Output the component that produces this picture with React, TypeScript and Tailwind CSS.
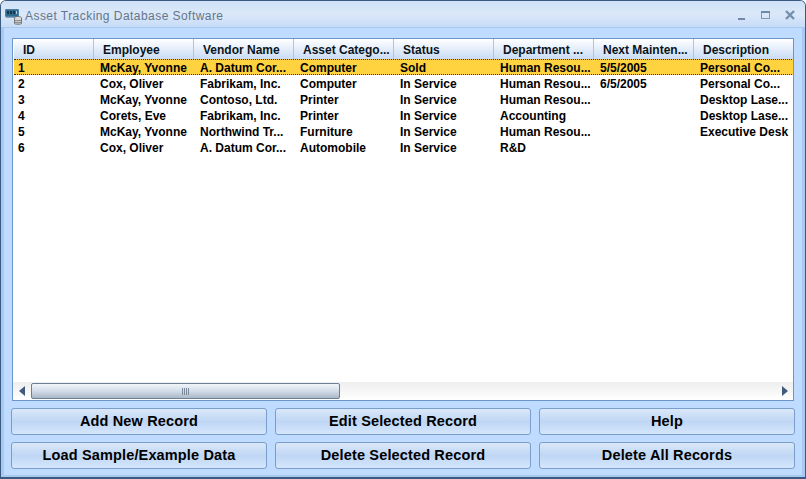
import * as React from "react";

const columns = [
  "ID",
  "Employee",
  "Vendor Name",
  "Asset Catego...",
  "Status",
  "Department ...",
  "Next Mainten...",
  "Description",
];

const rows = [
  ["1", "McKay, Yvonne", "A. Datum Cor...", "Computer", "Sold", "Human Resou...", "5/5/2005", "Personal Co..."],
  ["2", "Cox, Oliver", "Fabrikam, Inc.", "Computer", "In Service", "Human Resou...", "6/5/2005", "Personal Co..."],
  ["3", "McKay, Yvonne", "Contoso, Ltd.", "Printer", "In Service", "Human Resou...", "", "Desktop Lase..."],
  ["4", "Corets, Eve", "Fabrikam, Inc.", "Printer", "In Service", "Accounting", "", "Desktop Lase..."],
  ["5", "McKay, Yvonne", "Northwind Tr...", "Furniture", "In Service", "Human Resou...", "", "Executive Desk"],
  ["6", "Cox, Oliver", "A. Datum Cor...", "Automobile", "In Service", "R&D", "", ""],
];

const buttons = [
  "Add New Record",
  "Edit Selected Record",
  "Help",
  "Load Sample/Example Data",
  "Delete Selected Record",
  "Delete All Records",
];

function AppIcon() {
  return (
    <svg width="18" height="18" viewBox="0 0 18 18" className="shrink-0">
      <rect x="0" y="2" width="14" height="8" rx="1" fill="#4d7fa8" />
      <rect x="1" y="3" width="12" height="6" fill="#2f6d8f" />
      <rect x="2" y="4" width="2" height="3" fill="#16384f" />
      <rect x="5" y="4" width="2" height="3" fill="#16384f" />
      <rect x="8" y="4" width="2" height="3" fill="#16384f" />
      <rect x="11" y="4" width="1" height="3" fill="#a9d0e4" />
      <rect x="1" y="10" width="11" height="1" fill="#8aa2b5" />
      <ellipse cx="13" cy="11" rx="3.5" ry="1.5" fill="#e8e8e8" stroke="#555" strokeWidth="0.7" />
      <path d="M9.5 11v5.5c0 1 7 1 7 0V11" fill="#d8d8d8" stroke="#555" strokeWidth="0.7" />
      <path d="M9.5 13c0 1 7 1 7 0M9.5 15c0 1 7 1 7 0" fill="none" stroke="#555" strokeWidth="0.7" />
    </svg>
  );
}

function WindowControls() {
  return (
    <div className="-mt-[1px] flex items-center gap-[12px] pr-[9px]">
      <svg width="12" height="12" viewBox="0 0 12 12">
        <rect x="2" y="9" width="7" height="2" fill="#6f8aa8" />
      </svg>
      <svg width="12" height="12" viewBox="0 0 12 12">
        <rect x="1.5" y="2.5" width="8" height="7" fill="none" stroke="#7f98b4" />
        <rect x="1" y="2" width="9" height="2" fill="#6f8aa8" />
      </svg>
      <svg width="12" height="12" viewBox="0 0 12 12">
        <path d="M2 2l8 8M10 2l-8 8" stroke="#7490ad" strokeWidth="2.4" />
      </svg>
    </div>
  );
}

function ScrollBar() {
  return (
    <div className="flex h-[18px] shrink-0 items-center bg-gradient-to-b from-[#eeeeee] via-[#f6f6f6] to-[#ffffff]">
      <div className="flex w-[18px] shrink-0 justify-center">
        <svg width="7" height="10" viewBox="0 0 7 10">
          <path d="M6 0v10L0 5z" fill="#41597c" />
        </svg>
      </div>
      <div className="flex h-[16px] w-[309px] shrink-0 items-center justify-center rounded-[2px] border border-[#6d7f95] bg-gradient-to-b from-[#f0f5fa] via-[#d3dde8] to-[#aab8c8]">
        <svg width="8" height="7" viewBox="0 0 8 7">
          <path d="M0.5 0v7M2.5 0v7M4.5 0v7M6.5 0v7" stroke="#7c8a9c" />
        </svg>
      </div>
      <div className="flex-1" />
      <div className="flex w-[18px] shrink-0 justify-center">
        <svg width="7" height="10" viewBox="0 0 7 10">
          <path d="M1 0v10L7 5z" fill="#41597c" />
        </svg>
      </div>
    </div>
  );
}

export default function App() {
  return (
    <div className="flex h-[479px] w-[806px] flex-col overflow-hidden rounded-t-[6px] border border-b-2 border-[#3a5a80] bg-[#bfdbff] font-['Liberation_Sans',sans-serif]">
      {/* title bar */}
      <div className="flex h-[27px] shrink-0 items-center border-b border-[#a9c8f0] bg-gradient-to-b from-[#cfe1f8] via-[#dbe8f9] to-[#c7dcf7] pl-[4px] pt-[3px]">
        <AppIcon />
        <span className="ml-[2px] flex-1 text-[12px] tracking-[0.45px] text-[#65758b]">
          Asset Tracking Database Software
        </span>
        <WindowControls />
      </div>

      <div className="flex flex-1 flex-col border-x-[3px] border-b-[2px] border-[#a8c9f1] px-[7px] pt-[10px]">
        {/* table */}
        <div className="mx-[1px] flex h-[363px] shrink-0 flex-col overflow-hidden border border-[#6c95c9] bg-white">
          <div className="flex flex-1 flex-col overflow-hidden pl-[1px]">
            <div className="flex h-[20px] w-[800px] shrink-0 bg-gradient-to-b from-[#ffffff] to-[#c9dcf5]">
              {columns.map((c, i) => (
                <div
                  key={c}
                  className={`flex items-center pl-[9px] pt-[2px] text-[12px] font-bold text-[#0a1420] ${
                    i === 0 ? "w-[80px]" : "w-[100px]"
                  } ${i < 7 ? "border-r border-[#a9c6ea]" : ""}`}
                >
                  {c}
                </div>
              ))}
            </div>
            {rows.map((r, i) => (
              <div
                key={r[0]}
                className={`flex h-[16px] w-[800px] shrink-0 items-center text-[12px] font-bold text-black ${
                  i === 0 ? "border-y border-dotted border-[#33301f] bg-[#ffd23f]" : ""
                }`}
              >
                {r.map((cell, j) => (
                  <div
                    key={j}
                    className={`whitespace-nowrap pt-[2px] ${j === 0 ? "w-[80px] pl-[4px]" : "w-[100px] pl-[6px]"}`}
                  >
                    {cell}
                  </div>
                ))}
              </div>
            ))}
          </div>
          <ScrollBar />
        </div>

        {/* buttons */}
        <div className="mt-[7px] grid grid-cols-3 gap-x-[8px] gap-y-[7px]">
          {buttons.map((b) => (
            <button
              key={b}
              className="flex h-[27px] items-center justify-center rounded-[3px] border border-[#7b9dca] bg-gradient-to-b from-[#dbe8f9] via-[#bfd6f4] to-[#d5e6fc] text-[14.5px] font-bold tracking-[0.15px] text-black"
            >
              {b}
            </button>
          ))}
        </div>
      </div>
    </div>
  );
}
